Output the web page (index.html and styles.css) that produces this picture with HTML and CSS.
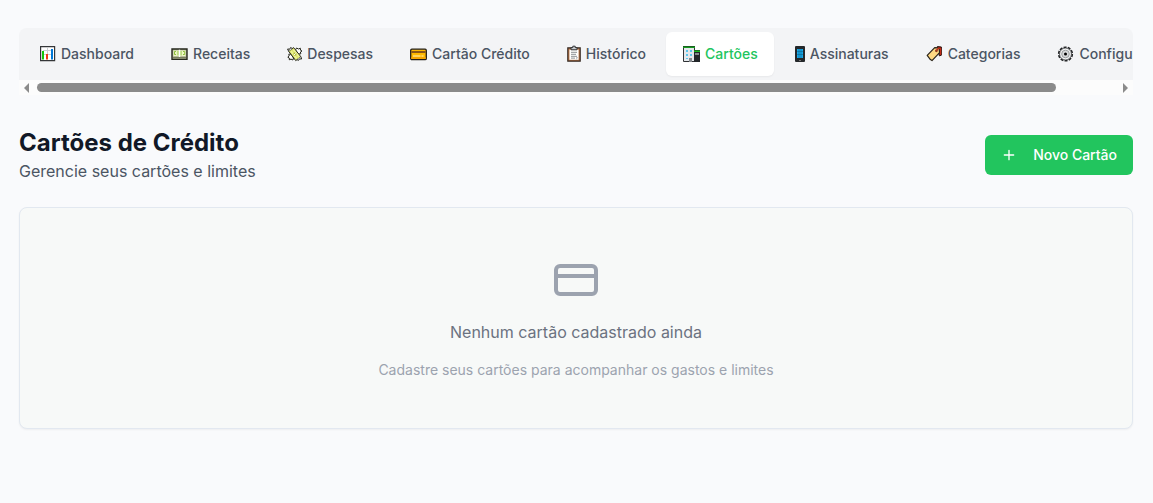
FILE: index.html
```html
<!DOCTYPE html>
<html lang="pt-BR">
<head>
<meta charset="utf-8">
<meta name="viewport" content="width=device-width, initial-scale=1">
<title>Cartões de Crédito</title>
<link rel="stylesheet" href="styles.css">
</head>
<body>
<main class="page">
  <nav class="tabs" aria-label="Seções">
    <div class="tab-list" role="tablist">
      <button class="tab" type="button" role="tab">
        <svg width="18" height="18" viewBox="0 0 18 18" aria-hidden="true"><path fill="#fff" stroke="#343638" stroke-width="1.2" d="M1.6 1.6h14v14h-14z"/><path stroke="#cbd0d4" d="M4 5.5h10M4 9.5h10M8.5 3v11"/><path fill="#16c60c" d="M3 6h2v8.6H3z"/><path fill="#f03a17" d="M7 9h2v5.6H7z"/><path fill="#0078d7" d="M12 4h2v10.6h-2z"/></svg>
        Dashboard
      </button>
      <button class="tab" type="button" role="tab">
        <svg width="19" height="18" viewBox="0 0 19 18" aria-hidden="true"><path fill="#b7bc9b" stroke="#25261d" stroke-width="1.4" d="M2 4h15v10.4H2z"/><path fill="none" stroke="#797d5e" stroke-width="1.4" d="M3 12.7h13"/><path fill="#edf7c4" d="M3.4 5.5h12.2V11H3.4z"/><path fill="none" stroke="#8fbf3f" d="M6 6.5H4.5v3H6M8 6v4.5M11 6v4.5M13 6.5h1.7v3H13"/><path stroke="#fff" stroke-width="1.4" d="M9.5 4.7v7.3"/></svg>
        Receitas
      </button>
      <button class="tab" type="button" role="tab">
        <svg width="17" height="18" viewBox="0 0 17 18" aria-hidden="true"><g stroke="#25261d" stroke-linejoin="round"><path fill="#fff" d="M9.5 5l1-2 2 1 1.8-.8.2 2L16 6l-1.6 1 .4 1.8-2.4.2zM7.5 13l-.6 2-1.9-.9-1.7.7V13l-1.5-.8L3.2 11l-.4-1.8 2.4-.2z"/><path fill="#dce56c" d="M2.6 6.2l5-3.6 7.3 9.2-5.2 3.8z"/><path fill="#fff" d="M2.6 6.2L1.6 4l2.2.2.8-1.7 1.6 1"/><path fill="#fff" d="M14.9 11.8l.7 2.2-2.2-.1-.9 1.5-1.5-.8"/></g><path stroke="#eff49a" stroke-width="1.6" d="M5 6.2l5.6 7.4M7.4 4.6l5.6 7.2"/><circle cx="8.9" cy="9.1" r="1.6" fill="#b0bd36"/><path stroke="#fff" d="M8 9.9l1.8-1.5"/></svg>
        Despesas
      </button>
      <button class="tab" type="button" role="tab">
        <svg width="19" height="18" viewBox="0 0 19 18" aria-hidden="true"><rect x="1.7" y="4.2" width="15.6" height="10.4" rx="1.2" fill="#ffb900" stroke="#211c16" stroke-width="1.3"/><path fill="#8a5618" d="M2.4 6h14.2v2H2.4z"/><path fill="#f7a500" d="M2.4 12h14.2v2H2.4z"/><path stroke="#fff1c4" stroke-width="1.2" d="M4 11h7.5M12.5 11h2"/></svg>
        Cartão Crédito
      </button>
      <button class="tab" type="button" role="tab">
        <svg width="16" height="18" viewBox="0 0 16 18" aria-hidden="true"><path fill="#bd7544" stroke="#352b26" stroke-width="1.2" d="M1.8 2.8h12.4v13.4H1.8z"/><path fill="#fff" d="M3.4 4.6h9.2v10.2H3.4z"/><path fill="#c8cdd0" stroke="#303236" d="M5 4.8V2.6h1.8V1.2h2.4v1.4H11v2.2z"/><path stroke="#8b8f93" d="M5 7.3h6M5 9.3h5M5 11.3h6M5 13.1h4"/><path fill="#c5c8cc" d="M10 15v-3h2.6z"/></svg>
        Histórico
      </button>
      <button class="tab tab-active" type="button" role="tab" aria-selected="true">
        <svg width="19" height="18" viewBox="0 0 19 18" aria-hidden="true"><path fill="#e5e8eb" stroke="#303236" d="M1.5 1.5h11v15h-11z"/><path fill="#222" d="M1 1h12v1H1z"/><path fill="#159b20" d="M1 1.5h12V3H1z"/><path fill="#222629" d="M12 5h6v12h-6z"/><path fill="#16b81c" d="M12 5.5h6V7h-6z"/><path fill="#5cc8ee" d="M4 5h2v2H4zM8 5h2v2H8zM4 9h2v2H4zM8 9h2v2H8zM4 13h2v1H4z"/><path fill="#858a8e" d="M7 13h3v4H7zM13 8h4v2h-4z"/></svg>
        Cartões
      </button>
      <button class="tab" type="button" role="tab">
        <svg width="12" height="18" viewBox="0 0 12 18" aria-hidden="true"><rect x="1" y="1" width="10" height="16" rx="1" fill="#24282b"/><path fill="#18a8e8" d="M3 4h6v9H3z"/><path stroke="#075c87" stroke-width=".5" d="M3 6.5h6M3 9.5h6M5 4v9M7 4v9"/><path stroke="#777" d="M5 15.5h2"/></svg>
        Assinaturas
      </button>
      <button class="tab" type="button" role="tab">
        <svg width="19" height="18" viewBox="0 0 19 18" aria-hidden="true"><path fill="#a51c12" stroke="#2e1a16" d="M12.4 1.5l4 .5v8.2l-2 .7z"/><path fill="#ffd983" stroke="#29231a" stroke-width="1.2" stroke-linejoin="round" d="M2.2 10.3l7.5-7.6 4.3.1.6 4.8L7 15.6 5.4 14.6z"/><circle cx="11.4" cy="5.8" r="1.4" fill="#913c1e"/><path fill="none" stroke="#c52b17" stroke-width="1.2" d="M11.4 5.5l2.2-2.5 2 .6v6.2"/></svg>
        Categorias
      </button>
      <button class="tab" type="button" role="tab">
        <svg width="19" height="18" viewBox="0 0 19 18" aria-hidden="true"><circle cx="9.5" cy="9" r="6.8" fill="none" stroke="#202224" stroke-width="1.6" stroke-dasharray="3 1.27"/><circle cx="9.5" cy="9" r="6" fill="#eff0f1" stroke="#333638" stroke-width=".8"/><circle cx="9.5" cy="9" r="3.8" fill="#d7d9da" stroke="#8c8f91" stroke-width=".8"/><circle cx="9.5" cy="9" r="1.5" fill="#000"/></svg>
        Configurações
      </button>
    </div>
    <div class="scrollbar" aria-hidden="true">
      <span class="arrow arrow-left"></span>
      <span class="track"><span class="thumb"></span></span>
      <span class="arrow arrow-right"></span>
    </div>
  </nav>

  <header class="page-header">
    <div>
      <h1 class="title">Cartões de Crédito</h1>
      <p class="subtitle">Gerencie seus cartões e limites</p>
    </div>
    <button class="add-button" type="button">
      <svg width="16" height="16" viewBox="0 0 24 24" fill="none" stroke="currentColor" stroke-width="2" stroke-linecap="round" aria-hidden="true"><path d="M5 12h14M12 5v14"/></svg>
      Novo Cartão
    </button>
  </header>

  <section class="empty-card">
    <svg class="empty-icon" width="48" height="48" viewBox="0 0 24 24" fill="none" stroke="currentColor" stroke-width="2" aria-hidden="true"><rect x="2" y="5" width="20" height="14" rx="2"/><path d="M2 10h20"/></svg>
    <p class="empty-title">Nenhum cartão cadastrado ainda</p>
    <p class="empty-text">Cadastre seus cartões para acompanhar os gastos e limites</p>
  </section>
</main>
</body>
</html>
```
FILE: styles.css
```css
* {
  box-sizing: border-box;
}

body {
  margin: 0;
  background: #f9fafc;
  color: #111827;
  font-family: Inter, "Liberation Sans", sans-serif;
}

h1,
p {
  margin: 0;
}

button {
  border: 0;
  font: inherit;
  cursor: pointer;
}

.page {
  padding: 28px 20px 32px 19px;
}

.tabs {
  margin-bottom: 32px;
  border-radius: 8px 8px 0 0;
  overflow: hidden;
}

.tab-list {
  display: flex;
  gap: 4px;
  padding: 4px;
  background: #f3f4f6;
  overflow-x: auto;
  scrollbar-width: none;
}

.tab {
  display: flex;
  flex: none;
  align-items: center;
  gap: 4px;
  padding: 12px 16px;
  border-radius: 6px;
  background: transparent;
  color: #4b5563;
  font-size: 14px;
  font-weight: 500;
  line-height: 20px;
  white-space: nowrap;
}

.tab-active {
  background: #fff;
  color: #22c55e;
  box-shadow: 0 1px 2px rgba(0, 0, 0, 0.05);
}

.scrollbar {
  display: flex;
  align-items: center;
  gap: 8px;
  height: 15px;
  padding: 0 5px;
  background: #fcfcfc;
}

.arrow {
  border: solid transparent;
  border-width: 5px 0;
}

.arrow-left {
  border-right: 5px solid #8b8b8b;
}

.arrow-right {
  border-left: 5px solid #8b8b8b;
}

.track {
  flex: 1;
}

.thumb {
  display: block;
  width: 94.5%;
  height: 9px;
  border-radius: 5px;
  background: #8b8b8b;
}

.page-header {
  display: flex;
  align-items: center;
  justify-content: space-between;
  margin-bottom: 24px;
}

.title {
  font-size: 24px;
  font-weight: 700;
  line-height: 32px;
}

.subtitle {
  color: #4b5563;
  font-size: 16px;
  line-height: 24px;
}

.add-button {
  display: flex;
  align-items: center;
  gap: 16px;
  padding: 10px 16px;
  border-radius: 6px;
  background: #22c55e;
  color: #fff;
  font-size: 14px;
  font-weight: 500;
  line-height: 20px;
}

.empty-card {
  display: flex;
  flex-direction: column;
  align-items: center;
  gap: 16px;
  padding: 48px;
  border: 1px solid #e2e8f0;
  border-radius: 8px;
  background: #f7f9f8;
  box-shadow: 0 1px 2px rgba(0, 0, 0, 0.05);
  text-align: center;
}

.empty-icon {
  color: #9ca3af;
}

.empty-title {
  color: #6b7280;
  font-size: 16px;
  line-height: 24px;
}

.empty-text {
  color: #9ca3af;
  font-size: 14px;
  line-height: 20px;
}
```
